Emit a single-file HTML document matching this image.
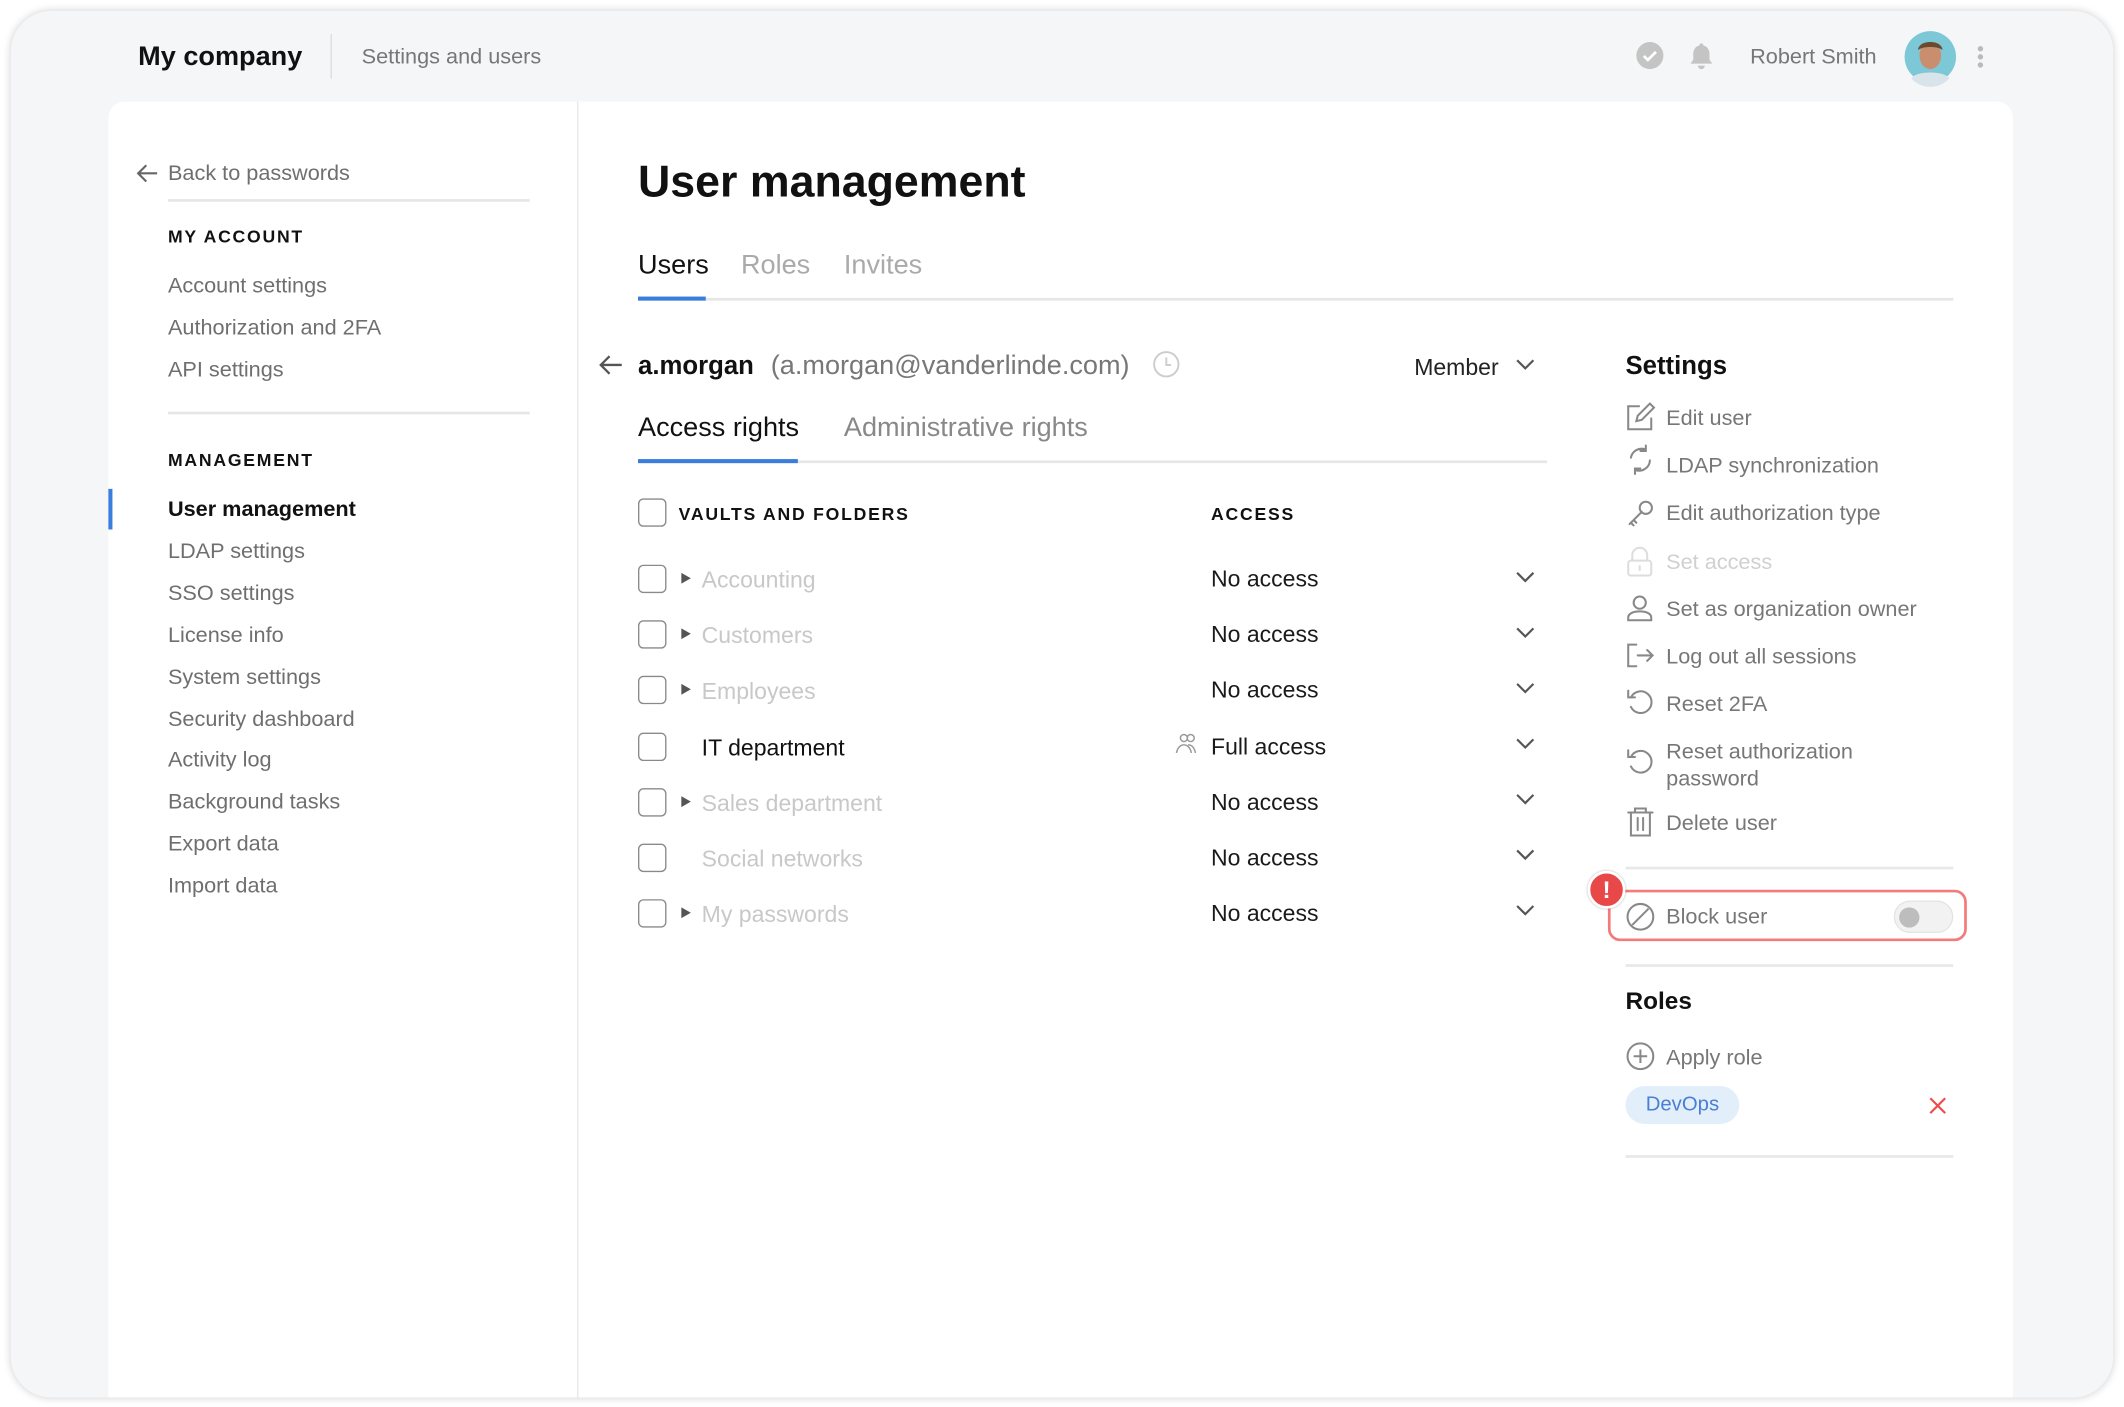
<!DOCTYPE html>
<html><head><meta charset="utf-8"><style>
*{margin:0;padding:0;box-sizing:border-box}
html,body{width:2124px;height:1407px;overflow:hidden;background:#fff;font-family:"Liberation Sans",sans-serif}
#w{position:absolute;left:0;top:0;width:1568px;height:1039px;transform:scale(1.35459,1.3542);transform-origin:0 0}
.a{position:absolute;white-space:nowrap;margin-top:2px}
.frame{position:absolute;left:8px;top:8px;width:1552px;height:1024px;background:#f5f6f8;border-radius:30px;box-shadow:0 0 6px rgba(0,0,0,.18)}
.card{position:absolute;left:80px;top:75px;width:1406px;height:957px;background:#fff;border-radius:12px 12px 0 0}
.g{color:#6f6f6f;font-size:16px}
.hd{font-size:13px;font-weight:bold;letter-spacing:1.3px;color:#111}
.line{position:absolute;height:1px;background:#e3e3e3}
.cb{position:absolute;width:21px;height:21px;border:1.5px solid #8a8a8a;border-radius:4px;background:#fff}
.nm{font-size:17px;color:#c8c8c8}
.ac{font-size:17px;color:#1a1a1a}
.tri{position:absolute;width:0;height:0;border-left:7px solid #555;border-top:4.5px solid transparent;border-bottom:4.5px solid transparent}
.si{font-size:16px;color:#777}
svg{position:absolute;overflow:visible}
</style></head><body><div id="w">
<div class="frame"></div>
<div class="a" style="left:102px;top:29px;font-size:20px;font-weight:bold;color:#111">My company</div>
<div style="position:absolute;left:244px;top:25px;width:1px;height:33px;background:#ddd"></div>
<div class="a g" style="left:267px;top:32px;color:#777">Settings and users</div>
<svg style="left:1208px;top:31px" width="20" height="20"><circle cx="10" cy="10" r="10" fill="#c4c4c4"/><path d="M5.5 10.3l3 3 6-6" stroke="#fff" stroke-width="2" fill="none"/></svg>
<svg style="left:1245px;top:30px" width="22" height="22"><path d="M11 2a1.5 1.5 0 0 1 1.5 1.6C15.5 4.3 17 6.8 17 10v4l2 3H3l2-3v-4c0-3.2 1.5-5.700 4.5-6.4A1.5 1.5 0 0 1 11 2z" fill="#c4c4c4"/><path d="M8.5 18.5a2.5 2.5 0 0 0 5 0z" fill="#c4c4c4"/></svg>
<div class="a" style="left:1292px;top:32px;font-size:16px;color:#777">Robert Smith</div>
<svg style="left:1405px;top:22px" width="40" height="40"><circle cx="20" cy="20" r="19" fill="#7cc8d6"/><ellipse cx="20" cy="19" rx="8" ry="10" fill="#c98e6e"/><path d="M11 15c0-8 18-8 18 0c-3-3-15-3-18 0z" fill="#6b4a32"/><path d="M6 36c3-6 25-6 28 0a19 19 0 0 1-28 0z" fill="#d9e4ea"/></svg>
<div style="position:absolute;left:1460px;top:34px;width:4px;height:4px;border-radius:2px;background:#bbb;box-shadow:0 6px 0 #bbb,0 12px 0 #bbb"></div>

<div class="card"></div>
<div style="position:absolute;left:426px;top:75px;width:1px;height:957px;background:#e8e8e8"></div>
<svg style="left:100px;top:120px" width="18" height="16"><path d="M16 8H3M8 2L2 8l6 6" stroke="#666" stroke-width="1.6" fill="none"/></svg>
<div class="a g" style="left:124px;top:118px">Back to passwords</div>
<div class="line" style="left:124px;top:147px;width:267px;height:2px;background:#e6e6e6"></div>
<div class="a hd" style="left:124px;top:165px">MY ACCOUNT</div>
<div class="a g" style="left:124px;top:201px">Account settings</div>
<div class="a g" style="left:124px;top:232px">Authorization and 2FA</div>
<div class="a g" style="left:124px;top:263px">API settings</div>
<div class="line" style="left:124px;top:304px;width:267px;height:2px;background:#e6e6e6"></div>
<div class="a hd" style="left:124px;top:330px">MANAGEMENT</div>
<div style="position:absolute;left:80px;top:361px;width:3px;height:30px;background:#3b7ddd"></div>
<div class="a" style="left:124px;top:366px;font-size:16px;font-weight:bold;color:#111">User management</div>
<div class="a g" style="left:124px;top:397px">LDAP settings</div>
<div class="a g" style="left:124px;top:428px">SSO settings</div>
<div class="a g" style="left:124px;top:459px">License info</div>
<div class="a g" style="left:124px;top:490px">System settings</div>
<div class="a g" style="left:124px;top:521px">Security dashboard</div>
<div class="a g" style="left:124px;top:551px">Activity log</div>
<div class="a g" style="left:124px;top:582px">Background tasks</div>
<div class="a g" style="left:124px;top:613px">Export data</div>
<div class="a g" style="left:124px;top:644px">Import data</div>

<div class="a" style="left:471px;top:113px;font-size:33px;font-weight:bold;color:#111">User management</div>
<div class="a" style="left:471px;top:183px;font-size:20px;color:#111">Users</div>
<div class="a" style="left:547px;top:183px;font-size:20px;color:#aaa">Roles</div>
<div class="a" style="left:623px;top:183px;font-size:20px;color:#aaa">Invites</div>
<div class="line" style="left:471px;top:220px;width:971px;height:2px;background:#e6e6e6"></div>
<div style="position:absolute;left:471px;top:219px;width:50px;height:3px;background:#3b7ddd"></div>

<svg style="left:441px;top:261px" width="20" height="17"><path d="M18 8.5H3M9 2L2.5 8.5 9 15" stroke="#555" stroke-width="1.7" fill="none"/></svg>
<div class="a" style="left:471px;top:258px;font-size:19px;font-weight:bold;color:#111">a.morgan</div>
<div class="a" style="left:569px;top:257px;font-size:20px;color:#777">(a.morgan@vanderlinde.com)</div>
<svg style="left:851px;top:259px" width="20" height="20"><circle cx="10" cy="10" r="9" stroke="#ccc" stroke-width="1.4" fill="none"/><path d="M10 5v5.5h3.5" stroke="#ccc" stroke-width="1.4" fill="none"/></svg>
<div class="a" style="left:1044px;top:260px;font-size:17px;color:#222">Member</div>
<svg style="left:1119px;top:265px" width="14" height="9"><path d="M1 1l6 6 6-6" stroke="#555" stroke-width="1.6" fill="none"/></svg>
<div class="a" style="left:471px;top:303px;font-size:20px;color:#111">Access rights</div>
<div class="a" style="left:623px;top:303px;font-size:20px;color:#888">Administrative rights</div>
<div class="line" style="left:471px;top:340px;width:671px;height:2px;background:#e6e6e6"></div>
<div style="position:absolute;left:471px;top:339px;width:118px;height:3px;background:#3b7ddd"></div>

<div class="cb" style="left:471px;top:368px"></div>
<div class="a hd" style="left:501px;top:370px">VAULTS AND FOLDERS</div>
<div class="a hd" style="left:894px;top:370px">ACCESS</div>

<div class="cb" style="left:471px;top:417px"></div><div class="tri" style="left:503px;top:423px"></div><div class="a nm" style="left:518px;top:417px">Accounting</div><div class="a ac" style="left:894px;top:416px">No access</div>
<div class="cb" style="left:471px;top:458px"></div><div class="tri" style="left:503px;top:464px"></div><div class="a nm" style="left:518px;top:458px">Customers</div><div class="a ac" style="left:894px;top:457px">No access</div>
<div class="cb" style="left:471px;top:499px"></div><div class="tri" style="left:503px;top:505px"></div><div class="a nm" style="left:518px;top:499px">Employees</div><div class="a ac" style="left:894px;top:498px">No access</div>
<div class="cb" style="left:471px;top:541px"></div><div class="a nm" style="left:518px;top:541px;color:#111">IT department</div>
<svg style="left:867px;top:541px" width="18" height="16"><circle cx="7" cy="4" r="2.6" stroke="#999" stroke-width="1.1" fill="none"/><circle cx="12" cy="4" r="2.6" stroke="#999" stroke-width="1.1" fill="none"/><path d="M1.5 15c1-5 4-6 5.5-6s4.5 1 5.5 6M10 9c2 0 4.5 1 5.5 6" stroke="#999" stroke-width="1.1" fill="none"/></svg>
<div class="a ac" style="left:894px;top:540px">Full access</div>
<div class="cb" style="left:471px;top:582px"></div><div class="tri" style="left:503px;top:588px"></div><div class="a nm" style="left:518px;top:582px">Sales department</div><div class="a ac" style="left:894px;top:581px">No access</div>
<div class="cb" style="left:471px;top:623px"></div><div class="a nm" style="left:518px;top:623px">Social networks</div><div class="a ac" style="left:894px;top:622px">No access</div>
<div class="cb" style="left:471px;top:664px"></div><div class="tri" style="left:503px;top:670px"></div><div class="a nm" style="left:518px;top:664px">My passwords</div><div class="a ac" style="left:894px;top:663px">No access</div>
<svg style="left:1119px;top:422px" width="14" height="260"><g stroke="#555" stroke-width="1.6" fill="none"><path d="M1 1l6 6 6-6"/><path d="M1 42l6 6 6-6"/><path d="M1 83l6 6 6-6"/><path d="M1 124l6 6 6-6"/><path d="M1 165l6 6 6-6"/><path d="M1 206l6 6 6-6"/><path d="M1 247l6 6 6-6"/></g></svg>

<div class="a" style="left:1200px;top:258px;font-size:19px;font-weight:bold;color:#111">Settings</div>
<svg style="left:1200px;top:297px" width="22" height="340"><g stroke="#888" stroke-width="1.5" fill="none" stroke-linecap="round">
<path d="M10 3H2v17h17v-8M8 14l1-4 9-9 3 3-9 9z"/>
<path d="M4 41a8 8 0 0 1 11-6M18 43a8 8 0 0 1-11 7M15 32v4h-4M7 53v-4h4"/>
<circle cx="15" cy="78" r="4.5"/><path d="M12 81l-9 9M6 87l2 2M4 89l2 2"/>
<g stroke="#ddd"><rect x="2" y="117" width="17" height="11" rx="2"/><path d="M5 117v-4a5.5 5.5 0 0 1 11 0v4M10.5 121v3"/></g>
<circle cx="10.5" cy="148" r="4.5"/><path d="M2 161v-2c0-3 4-4.5 8.5-4.5S19 156 19 159v2z"/>
<path d="M8 179H2v16h6M9 187h11M16 183l4 4-4 4"/>
<path d="M4 218a8 8 0 1 1 0 7M2 213v5h5"/>
<path d="M4 262a8 8 0 1 1 0 7M2 257v5h5"/>
<path d="M2 303h18M7 303v-3h8v3M4 303v17h14v-17M9 307v9M13 307v9"/>
</g></svg>
<div class="a si" style="left:1230px;top:299px">Edit user</div>
<div class="a si" style="left:1230px;top:334px">LDAP synchronization</div>
<div class="a si" style="left:1230px;top:369px">Edit authorization type</div>
<div class="a si" style="left:1230px;top:405px;color:#d0d0d0">Set access</div>
<div class="a si" style="left:1230px;top:440px">Set as organization owner</div>
<div class="a si" style="left:1230px;top:475px">Log out all sessions</div>
<div class="a si" style="left:1230px;top:510px">Reset 2FA</div>
<div class="a si" style="left:1230px;top:544px;line-height:20px">Reset authorization<br>password</div>
<div class="a si" style="left:1230px;top:598px">Delete user</div>
<div class="line" style="left:1200px;top:640px;width:242px;height:2px;background:#e8e8e8"></div>
<div style="position:absolute;left:1187px;top:657px;width:265px;height:38px;border:2px solid #f37b7b;border-radius:9px"></div>
<div style="position:absolute;left:1172px;top:643px;width:28px;height:28px;border-radius:14px;background:#e94848;border:2px solid #fff;box-shadow:0 0 2px rgba(0,0,0,.3);color:#fff;font-weight:bold;font-size:18px;text-align:center;line-height:24px">!</div>
<svg style="left:1200px;top:666px" width="22" height="22"><circle cx="11" cy="11" r="9.5" stroke="#888" stroke-width="1.5" fill="none"/><path d="M5 17L17 5" stroke="#888" stroke-width="1.5"/></svg>
<div class="a si" style="left:1230px;top:667px">Block user</div>
<div style="position:absolute;left:1398px;top:665px;width:44px;height:24px;border-radius:12px;background:#f2f2f2;border:1px solid #e4e4e4"></div>
<div style="position:absolute;left:1402px;top:670px;width:15px;height:15px;border-radius:8px;background:#bdbdbd"></div>
<div class="line" style="left:1200px;top:712px;width:242px;height:2px;background:#e8e8e8"></div>
<div class="a" style="left:1200px;top:727px;font-size:18px;font-weight:bold;color:#111">Roles</div>
<svg style="left:1200px;top:769px" width="22" height="22"><circle cx="11" cy="11" r="9.5" stroke="#888" stroke-width="1.5" fill="none"/><path d="M11 6v10M6 11h10" stroke="#888" stroke-width="1.5"/></svg>
<div class="a si" style="left:1230px;top:771px">Apply role</div>
<div style="position:absolute;left:1200px;top:802px;width:84px;height:28px;border-radius:14px;background:#e3eefb;color:#4a7fd4;font-size:15px;text-align:center;line-height:28px">DevOps</div>
<svg style="left:1424px;top:810px" width="13" height="13"><path d="M1 1l11 11M12 1L1 12" stroke="#f04b4b" stroke-width="1.6"/></svg>
<div class="line" style="left:1200px;top:853px;width:242px;height:2px;background:#e8e8e8"></div>
</div></body></html>
